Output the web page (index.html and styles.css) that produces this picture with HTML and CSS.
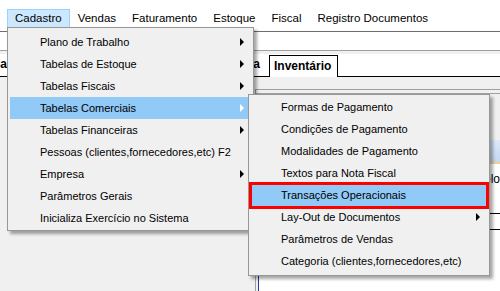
FILE: index.html
```html
<!DOCTYPE html>
<html lang="pt">
  <head>
    <meta charset="UTF-8" />
    <title>Cadastro</title>
    <link rel="stylesheet" href="styles.css">
  </head>
  <body>
    <nav class="menubar">
      <div class="menubar-item open">Cadastro</div>
      <div class="menubar-item">Vendas</div>
      <div class="menubar-item">Faturamento</div>
      <div class="menubar-item">Estoque</div>
      <div class="menubar-item">Fiscal</div>
      <div class="menubar-item">Registro Documentos</div>
    </nav>

    <div class="toolbar"></div>

    <div class="tabs">
      <div class="tab clip">Pesquisa</div>
      <div class="tab second">Entrada e Saída</div>
      <div class="tab active">Inventário</div>
    </div>

    <div class="content">
      <div class="panel">
        <div class="panel-inner">
          <div class="grid">
            <div class="grid-head"></div>
            <div class="grid-row first"><span class="cell">Modelo</span></div>
            <div class="grid-row"></div>
          </div>
        </div>
      </div>
    </div>

    <!-- menu aberto -->
    <div class="dropdown main">
      <div class="menu-item has-sub">Plano de Trabalho</div>
      <div class="menu-item has-sub">Tabelas de Estoque</div>
      <div class="menu-item has-sub">Tabelas Fiscais</div>
      <div class="menu-item has-sub hover">Tabelas Comerciais</div>
      <div class="menu-item has-sub">Tabelas Financeiras</div>
      <div class="menu-item">Pessoas (clientes,fornecedores,etc) F2</div>
      <div class="menu-item has-sub">Empresa</div>
      <div class="menu-item">Parâmetros Gerais</div>
      <div class="menu-item">Inicializa Exercício no Sistema</div>
    </div>

    <div class="dropdown sub">
      <div class="menu-item">Formas de Pagamento</div>
      <div class="menu-item">Condições de Pagamento</div>
      <div class="menu-item">Modalidades de Pagamento</div>
      <div class="menu-item">Textos para Nota Fiscal</div>
      <div class="menu-item hover mark">Transações Operacionais</div>
      <div class="menu-item has-sub">Lay-Out de Documentos</div>
      <div class="menu-item">Parâmetros de Vendas</div>
      <div class="menu-item">Categoria (clientes,fornecedores,etc)</div>
    </div>
  </body>
</html>
```

FILE: styles.css
```css
/* Reset */
* {
  margin: 0;
  padding: 0;
  box-sizing: border-box;
}

body {
  font-family: "Liberation Sans", Arial, sans-serif;
  color: #000;
  background-color: #f0f0f0;
  width: 500px;
  height: 291px;
  overflow: hidden;
  position: relative;
}

/* Menu principal */
.menubar {
  display: flex;
  height: 31px;
  padding: 9px 0 0 7px;
  background-color: #fff;
  font-size: 11.5px;
}

.menubar-item {
  height: 18px;
  line-height: 17px;
  padding: 0 7px;
  border: 1px solid transparent;
  border-bottom: 0;
  white-space: nowrap;
}

.menubar-item.open {
  background-color: #cce8ff;
  border-color: #99d1ff;
}

.toolbar {
  height: 20px;
  background-color: #fff;
  border-top: 1px solid #6e6e6e;
  border-bottom: 1px solid #a0a0a0;
}

/* Abas */
.tabs {
  display: flex;
  margin-top: 3px;
  height: 23px;
  background-color: #fff;
  border-bottom: 1px solid #000;
}

.tab {
  font-size: 12px;
  font-weight: bold;
  line-height: 21px;
  white-space: nowrap;
  overflow: hidden;
}

.tab.clip {
  width: 12px;
  direction: rtl;
  padding-right: 5px;
}

.tab.second {
  width: 257px;
  text-align: right;
  padding-right: 9px;
}

.tab.active {
  margin-top: 1px;
  height: 22px;
  line-height: 20px;
  padding: 0 6px 0 4px;
  border: 1px solid #000;
  border-bottom: 0;
  background-color: #fff;
}

/* Conteudo */
.content {
  height: 214px;
  padding: 12px 0 0 255px;
}

.panel {
  height: 100%;
  border-top: 1px solid #a0a0a0;
  border-left: 1px solid #a0a0a0;
  padding-top: 3px;
}

.panel-inner {
  height: 100%;
  border-top: 1px solid #a0a0a0;
  padding: 46px 0 0 2px;
}

.grid {
  height: 100%;
  background-color: #fff;
  border-left: 1px solid #1f3d99;
}

.grid-head {
  height: 24px;
  background: linear-gradient(#dde9f8, #c2d8f2);
  border-bottom: 2px solid #f5cf92;
}

.grid-row {
  height: 16px;
  border-bottom: 1px solid #000;
}

.grid-row.first {
  height: 50px;
  padding-top: 7px;
  text-align: right;
  font-size: 12px;
  line-height: 16px;
}

/* Menus suspensos */
.dropdown {
  position: absolute;
  background-color: #f0f0f0;
  border: 1px solid #979797;
  box-shadow: 3px 3px 3px rgba(0, 0, 0, 0.35);
  font-size: 11px;
}

.dropdown.main {
  left: 7px;
  top: 27px;
  width: 247px;
  padding: 3px 2px 1px;
}

.dropdown.sub {
  left: 248px;
  top: 94px;
  width: 242px;
  padding: 1px 2px 3px;
}

.menu-item {
  position: relative;
  height: 22px;
  line-height: 22px;
  padding-left: 30px;
  white-space: nowrap;
}

.menu-item.hover {
  background-color: #91c9f7;
}

.has-sub::after {
  content: "";
  position: absolute;
  right: 7px;
  top: 7px;
  border-left: 4px solid #000;
  border-top: 4px solid transparent;
  border-bottom: 4px solid transparent;
}

.has-sub.hover::after {
  border-left-color: #fff;
}

/* destaque vermelho */
.mark::before {
  content: "";
  position: absolute;
  left: -2px;
  right: -2px;
  top: -2px;
  bottom: -3px;
  border: 3px solid #ff0000;
}
```
